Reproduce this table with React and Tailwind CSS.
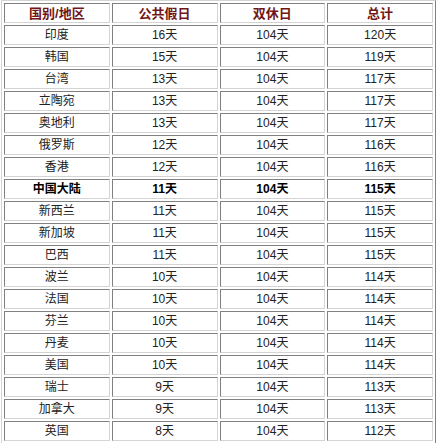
import React from 'react';

const rows = [
  ['印度', '16天', '104天', '120天'],
  ['韩国', '15天', '104天', '119天'],
  ['台湾', '13天', '104天', '117天'],
  ['立陶宛', '13天', '104天', '117天'],
  ['奥地利', '13天', '104天', '117天'],
  ['俄罗斯', '12天', '104天', '116天'],
  ['香港', '12天', '104天', '116天'],
  ['中国大陆', '11天', '104天', '115天', true],
  ['新西兰', '11天', '104天', '115天'],
  ['新加坡', '11天', '104天', '115天'],
  ['巴西', '11天', '104天', '115天'],
  ['波兰', '10天', '104天', '114天'],
  ['法国', '10天', '104天', '114天'],
  ['芬兰', '10天', '104天', '114天'],
  ['丹麦', '10天', '104天', '114天'],
  ['美国', '10天', '104天', '114天'],
  ['瑞士', '9天', '104天', '113天'],
  ['加拿大', '9天', '104天', '113天'],
  ['英国', '8天', '104天', '112天'],
];

const headers = ['国别/地区', '公共假日', '双休日', '总计'];

export default function App() {
  return (
    <div className="w-[440px] h-[443px] bg-white pl-[1px] font-['Liberation_Sans','Noto_Sans_CJK_SC',sans-serif]">
      <table className="w-[435px] border-separate border-spacing-[2px] border border-t-[#d4d4d4] border-l-[#d4d4d4] border-r-[#808080] border-b-[#808080] text-[12px] text-[#222]">
        <thead>
          <tr className="h-[20px]">
            {headers.map((h) => (
              <th
                key={h}
                className="w-1/4 border border-t-[#808080] border-l-[#808080] border-r-[#d4d4d4] border-b-[#d4d4d4] text-center align-middle text-[13px] font-bold text-[#701616] leading-none p-0"
              >
                {h}
              </th>
            ))}
          </tr>
        </thead>
        <tbody>
          {rows.map((r) => (
            <tr key={r[0]} className="h-[20px]">
              {r.slice(0, 4).map((c, i) => (
                <td
                  key={i}
                  className={`border border-t-[#808080] border-l-[#808080] border-r-[#d4d4d4] border-b-[#d4d4d4] text-center align-middle leading-none p-0 ${r[4] ? 'font-bold text-black' : ''}`}
                >
                  {c}
                </td>
              ))}
            </tr>
          ))}
        </tbody>
      </table>
    </div>
  );
}
